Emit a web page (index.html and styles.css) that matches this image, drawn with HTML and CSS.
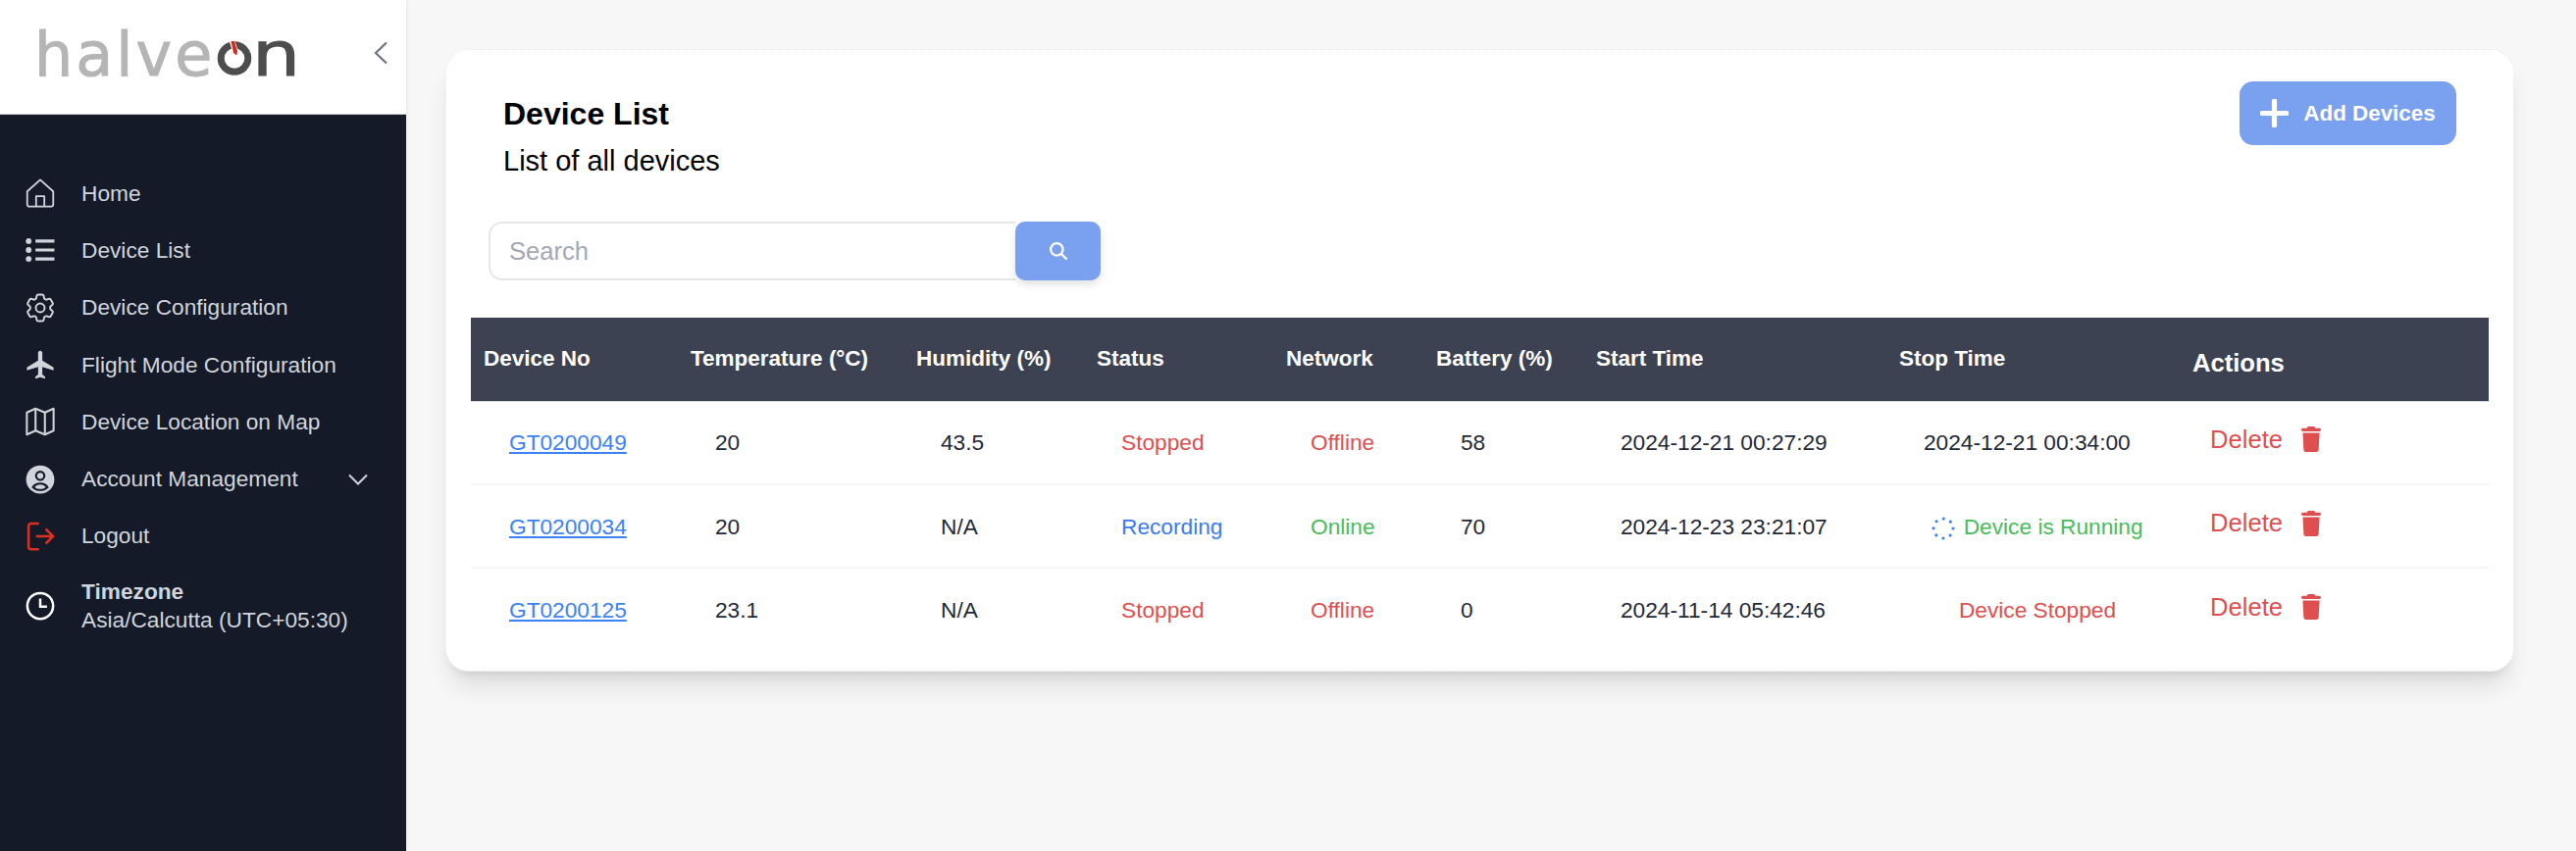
FILE: index.html
```html
<!DOCTYPE html>
<html>
<head>
  <meta charset="UTF-8">
  <title>Device List</title>
  <link rel="stylesheet" href="styles.css">
</head>
<body>

  <aside class="sidebar">
    <div class="brand">
      <div class="logo">
        <span class="logo-light">halve</span>
        <svg class="logo-o" viewBox="0 0 36 36">
          <circle cx="18" cy="18.500" r="13.800" fill="none" stroke="#4d4d4d" stroke-width="7"/>
          <path d="M12.500 0 18 0 22.500 12 22 17 17 15z" fill="#fff"/>
          <path d="M14.500 1 18 1 21 11 20.500 15.500 17 13z" fill="#d9281e"/>
        </svg>
        <span class="logo-dark">n</span>
      </div>
      <svg class="collapse" viewBox="0 0 14 24"><path d="M13 1.500 2 12l11 10.500" fill="none" stroke="#6b7280" stroke-width="2.200"/></svg>
    </div>

    <nav class="menu">
      <a class="menu-item" href="#">
        <svg class="menu-icon" viewBox="1.500 1 21 21.500" fill="none" stroke="#d1d5db" stroke-width="1.300" stroke-linejoin="round"><path d="M2.500 10.500 12 2l9.500 8.500V20a1.500 1.500 0 0 1-1.500 1.500H4A1.500 1.500 0 0 1 2.500 20z"/><path d="M9 21.500V14h6v7.500"/></svg>
        <span>Home</span>
      </a>
      <a class="menu-item" href="#">
        <svg class="menu-icon" viewBox="0 0 28 24" fill="none" stroke="#d1d5db"><path d="M9.500 3.500h18M9.500 12h18M9.500 20.500h18" stroke-width="3"/><circle cx="3" cy="3.500" r="2.700" fill="#d1d5db" stroke="none"/><circle cx="3" cy="12" r="2.700" fill="#d1d5db" stroke="none"/><circle cx="3" cy="20.500" r="2.700" fill="#d1d5db" stroke="none"/></svg>
        <span>Device List</span>
      </a>
      <a class="menu-item" href="#">
        <svg class="menu-icon" viewBox="2 2 20 20" fill="none" stroke="#d1d5db" stroke-width="1.300"><path stroke-linejoin="round" d="M9.594 3.940c.09-.542.56-.94 1.110-.94h2.593c.55 0 1.020.398 1.110.94l.213 1.281c.063.374.313.686.645.870.074.04.147.083.22.127.325.196.72.257 1.075.124l1.217-.456a1.125 1.125 0 0 1 1.370.49l1.296 2.247a1.125 1.125 0 0 1-.26 1.431l-1.003.827c-.293.241-.438.613-.43.992a7.723 7.723 0 0 1 0 .255c-.008.378.137.75.43.991l1.004.827c.424.35.534.955.26 1.430l-1.298 2.247a1.125 1.125 0 0 1-1.369.491l-1.217-.456c-.355-.133-.75-.072-1.076.124a6.470 6.470 0 0 1-.22.128c-.331.183-.581.495-.644.869l-.213 1.281c-.09.543-.56.94-1.110.94h-2.594c-.55 0-1.019-.398-1.110-.94l-.213-1.281c-.062-.374-.312-.686-.644-.87a6.520 6.520 0 0 1-.22-.127c-.325-.196-.72-.257-1.076-.124l-1.217.456a1.125 1.125 0 0 1-1.369-.49l-1.297-2.247a1.125 1.125 0 0 1 .26-1.431l1.004-.827c.292-.24.437-.613.43-.991a6.932 6.932 0 0 1 0-.255c.007-.38-.138-.751-.43-.992l-1.004-.827a1.125 1.125 0 0 1-.26-1.430l1.297-2.247a1.125 1.125 0 0 1 1.370-.491l1.216.456c.356.133.751.072 1.076-.124.072-.044.146-.086.22-.128.332-.183.582-.495.644-.869l.214-1.280Z"/><circle cx="12" cy="12" r="3"/></svg>
        <span>Device Configuration</span>
      </a>
      <a class="menu-item" href="#">
        <svg class="menu-icon" viewBox="1.500 1.500 20 21" fill="#d1d5db"><path d="M21 16v-2l-8-5V3.500c0-.83-.67-1.500-1.500-1.500S10 2.670 10 3.500V9l-8 5v2l8-2.500V19l-2 1.500V22l3.500-1 3.500 1v-1.500L13 19v-5.500l8 2.500z"/></svg>
        <span>Flight Mode Configuration</span>
      </a>
      <a class="menu-item" href="#">
        <svg class="menu-icon" viewBox="1 1.500 22 21.500" fill="none" stroke="#d1d5db" stroke-width="1.500" stroke-linejoin="round"><path d="M2 5.500 8.500 2.500l7 3 6.500-3v16.500l-6.500 3-7-3L2 22z"/><path d="M8.500 2.500v16.500M15.500 5.500V22"/></svg>
        <span>Device Location on Map</span>
      </a>
      <a class="menu-item" href="#">
        <svg class="menu-icon" viewBox="0 0 24 24"><circle cx="12" cy="12" r="11.500" fill="#d1d5db"/><circle cx="12" cy="9" r="4.200" fill="#141a28"/><path d="M5 18.500c1.200-2.700 3.700-4 7-4s5.800 1.300 7 4c-1.800 1.800-4.300 2.900-7 2.900s-5.200-1.100-7-2.900z" fill="#141a28"/><circle cx="12" cy="9" r="2.500" fill="#d1d5db"/><path d="M7.500 18.300c1-1.400 2.500-2.100 4.500-2.100s3.500.7 4.500 2.100c-1.200 1-2.800 1.500-4.500 1.500s-3.300-.5-4.500-1.500z" fill="#d1d5db"/></svg>
        <span>Account Management</span>
        <svg class="menu-caret" viewBox="0 0 20 12"><path d="M1 1.500 10 10.500l9-9" fill="none" stroke="#d1d5db" stroke-width="2"/></svg>
      </a>
      <a class="menu-item" href="#">
        <svg class="menu-icon" viewBox="0 0 24 24" fill="none" stroke="#dc2f1f" stroke-width="2"><path d="M11 1.500H4.500a2 2 0 0 0-2 2v17a2 2 0 0 0 2 2H11"/><path d="M8.500 12h14M16.500 6l6 6-6 6"/></svg>
        <span>Logout</span>
      </a>
      <div class="menu-item timezone">
        <svg class="menu-icon" viewBox="0 0 24 24" fill="none" stroke="#fff" stroke-width="2"><circle cx="12" cy="12" r="10.500"/><path d="M12 6v6.500h5.500"/></svg>
        <div>
          <div class="timezone-title">Timezone</div>
          <div>Asia/Calcutta (UTC+05:30)</div>
        </div>
      </div>
    </nav>
  </aside>

  <main class="content">
    <section class="card">
      <div class="card-head">
        <div class="card-title">
          <h1>Device List</h1>
          <p>List of all devices</p>
        </div>
        <button class="add-btn">
          <svg viewBox="0 0 28 28"><path d="M14 2v24M2 14h24" fill="none" stroke="#fff" stroke-width="5" stroke-linecap="round"/></svg>
          Add Devices
        </button>
      </div>

      <div class="search">
        <input type="text" placeholder="Search">
        <button>
          <svg viewBox="0 0 512 512" fill="#fff"><path d="M416 208c0 45.900-14.900 88.300-40 122.700L502.600 457.400c12.500 12.500 12.500 32.800 0 45.300s-32.800 12.500-45.300 0L330.700 376c-34.400 25.200-76.800 40-122.700 40C93.100 416 0 322.900 0 208S93.100 0 208 0S416 93.100 416 208zM208 352a144 144 0 1 0 0-288 144 144 0 1 0 0 288z"/></svg>
        </button>
      </div>

      <table>
        <colgroup>
          <col class="c-device"><col class="c-temp"><col class="c-hum"><col class="c-status"><col class="c-net"><col class="c-batt"><col class="c-start"><col class="c-stop"><col>
        </colgroup>
        <thead>
          <tr>
            <th>Device No</th>
            <th>Temperature (°C)</th>
            <th>Humidity (%)</th>
            <th>Status</th>
            <th>Network</th>
            <th>Battery (%)</th>
            <th>Start Time</th>
            <th>Stop Time</th>
            <th class="th-actions">Actions</th>
          </tr>
        </thead>
        <tbody>
          <tr>
            <td><a class="device-link" href="#">GT0200049</a></td>
            <td>20</td>
            <td>43.5</td>
            <td class="red">Stopped</td>
            <td class="red">Offline</td>
            <td>58</td>
            <td>2024-12-21 00:27:29</td>
            <td class="td-stop">2024-12-21 00:34:00</td>
            <td class="td-actions"><div class="delete">Delete <svg viewBox="0 0 448 512" preserveAspectRatio="none"><path d="M135.200 17.700L128 32H32C14.300 32 0 46.300 0 64S14.300 96 32 96H416c17.700 0 32-14.300 32-32s-14.300-32-32-32H320l-7.200-14.300C307.400 6.800 296.300 0 284.200 0H163.800c-12.100 0-23.200 6.800-28.600 17.700zM416 128H32L53.200 467c1.600 25.300 22.600 45 47.900 45H346.900c25.300 0 46.300-19.700 47.900-45L416 128z"/></svg></div></td>
          </tr>
          <tr>
            <td><a class="device-link" href="#">GT0200034</a></td>
            <td>20</td>
            <td>N/A</td>
            <td class="blue">Recording</td>
            <td class="green">Online</td>
            <td>70</td>
            <td>2024-12-23 23:21:07</td>
            <td class="td-stop green center">
              <svg class="spinner" viewBox="0 0 24 24"><circle cx="12" cy="12" r="10" fill="none" stroke="#3b82f6" stroke-width="3.200" stroke-linecap="round" stroke-dasharray="0 7.850"/></svg>
              Device is Running
            </td>
            <td class="td-actions"><div class="delete">Delete <svg viewBox="0 0 448 512" preserveAspectRatio="none"><path d="M135.200 17.700L128 32H32C14.300 32 0 46.300 0 64S14.300 96 32 96H416c17.700 0 32-14.300 32-32s-14.300-32-32-32H320l-7.200-14.300C307.400 6.800 296.300 0 284.200 0H163.800c-12.100 0-23.200 6.800-28.600 17.700zM416 128H32L53.200 467c1.600 25.300 22.600 45 47.900 45H346.900c25.300 0 46.300-19.700 47.900-45L416 128z"/></svg></div></td>
          </tr>
          <tr>
            <td><a class="device-link" href="#">GT0200125</a></td>
            <td>23.1</td>
            <td>N/A</td>
            <td class="red">Stopped</td>
            <td class="red">Offline</td>
            <td>0</td>
            <td>2024-11-14 05:42:46</td>
            <td class="td-stop red center">Device Stopped</td>
            <td class="td-actions"><div class="delete">Delete <svg viewBox="0 0 448 512" preserveAspectRatio="none"><path d="M135.200 17.700L128 32H32C14.300 32 0 46.300 0 64S14.300 96 32 96H416c17.700 0 32-14.300 32-32s-14.300-32-32-32H320l-7.200-14.300C307.400 6.800 296.300 0 284.200 0H163.800c-12.100 0-23.200 6.800-28.600 17.700zM416 128H32L53.200 467c1.600 25.300 22.600 45 47.900 45H346.900c25.300 0 46.300-19.700 47.900-45L416 128z"/></svg></div></td>
          </tr>
        </tbody>
      </table>
    </section>
  </main>

</body>
</html>
```

FILE: styles.css
```css
body {
  margin: 0;
  height: 868px;
  overflow: hidden;
  display: flex;
  background-color: #f7f7f7;
  font-family: "Liberation Sans", Arial, sans-serif;
  font-size: 22.4px;
  color: #1f2937;
}

/* sidebar */
.sidebar {
  width: 414px;
  flex-shrink: 0;
  background-color: #141a28;
  box-shadow: 1px 0 3px rgba(0, 0, 0, 0.08);
  font-size: 22.7px;
}

.brand {
  height: 116px;
  background-color: white;
  border-bottom: 1px solid #c9ccd2;
  display: flex;
  align-items: center;
  justify-content: space-between;
  padding: 0 19px 0 35px;
}

.logo {
  display: flex;
  align-items: baseline;
  margin-bottom: 5px;
  font-family: "DejaVu Sans", sans-serif;
  font-size: 62px;
  line-height: 62px;
  letter-spacing: 3px;
  -webkit-text-stroke: 1px;
}

.logo-light {
  color: #b5b5b5;
}

.logo-dark {
  color: #4d4d4d;
  transform: scaleX(1.25);
  transform-origin: left;
}

.logo-o {
  width: 36px;
  height: 36px;
  margin-left: 2px;
}

.collapse {
  width: 14px;
  height: 24px;
  margin-top: -9px;
}

.menu {
  padding-top: 51px;
}

.menu-item {
  height: 58.3px;
  display: flex;
  align-items: center;
  padding: 0 39px 0 26px;
  color: #d1d5db;
  text-decoration: none;
}

.menu-icon {
  width: 30px;
  height: 30px;
  margin-right: 27px;
  flex-shrink: 0;
}

.menu-caret {
  width: 20px;
  height: 12px;
  margin-left: auto;
}

.timezone {
  margin-top: 13px;
  line-height: 29px;
}

.timezone-title {
  font-weight: bold;
}

/* main */
.content {
  flex: 1;
  padding: 50px 63px 0 40px;
}

.card {
  background-color: white;
  border: 1px dotted #e6e6e6;
  border-radius: 24px;
  padding: 0 25px 20px;
  box-shadow: 0 20px 25px -5px rgba(0, 0, 0, 0.1), 0 8px 10px -6px rgba(0, 0, 0, 0.1);
}

.card-head {
  display: flex;
  justify-content: space-between;
  align-items: flex-start;
  padding: 32px 33px 0;
}

.card-title {
  margin-top: 14px;
  color: black;
}

.card-title h1 {
  margin: 0;
  font-size: 32px;
  line-height: 38px;
}

.card-title p {
  margin: 9px 0 0;
  font-size: 29px;
  line-height: 40px;
}

.add-btn {
  width: 221px;
  height: 65px;
  background-color: #7aa1ef;
  border: none;
  border-radius: 14px;
  color: white;
  font-family: inherit;
  font-weight: bold;
  font-size: 22.4px;
  display: flex;
  align-items: center;
  justify-content: center;
  gap: 15px;
}

.add-btn svg {
  width: 29px;
  height: 29px;
}

.search {
  width: 624px;
  height: 60px;
  margin: 42px 0 38px 18px;
  display: flex;
}

.search input {
  flex: 1;
  min-width: 0;
  border: 2px solid #e5e7eb;
  border-right: none;
  border-radius: 14px 0 0 14px;
  padding: 0 19px;
  font-family: inherit;
  font-size: 25.6px;
  outline: none;
}

.search input::placeholder {
  color: #a3a8b3;
}

.search button {
  width: 87px;
  background-color: #7aa1ef;
  border: none;
  border-radius: 10px;
  box-shadow: 0 4px 8px rgba(0, 0, 0, 0.12);
  display: flex;
  align-items: center;
  justify-content: center;
}

.search button svg {
  width: 18px;
  height: 18px;
}

/* table */
table {
  width: 100%;
  table-layout: fixed;
  border-collapse: collapse;
}

.c-device { width: 210px; }
.c-temp { width: 230px; }
.c-hum { width: 184px; }
.c-status { width: 193px; }
.c-net { width: 153px; }
.c-batt { width: 163px; }
.c-start { width: 309px; }
.c-stop { width: 299px; }

th {
  box-sizing: border-box;
  height: 85px;
  padding: 0 0 0 14px;
  background-color: #3c4252;
  color: white;
  text-align: left;
  font-weight: bold;
  font-size: 22.5px;
  white-space: nowrap;
  border-bottom: 1px solid #d8dce3;
}

th:first-child {
  padding-left: 13px;
}

.th-actions {
  font-size: 25.6px;
  padding-top: 8px;
}

td {
  box-sizing: border-box;
  height: 85px;
  padding: 1px 0 0 39px;
  border-bottom: 2px solid #f4f5f6;
  white-space: nowrap;
  font-size: 22.7px;
}

tbody tr:last-child td {
  border-bottom: none;
}

.device-link {
  color: #3b82f6;
}

.red { color: #e04f4f; }
.blue { color: #3b7bf0; }
.green { color: #46bd5a; }

.td-stop {
  padding-right: 28px;
}

.center {
  text-align: center;
}

.spinner {
  width: 24px;
  height: 24px;
  vertical-align: -6px;
  margin-right: 2px;
}

.td-actions {
  padding-left: 32px;
}

.delete {
  display: flex;
  align-items: center;
  gap: 19px;
  font-size: 25.6px;
  color: #e04f4f;
  margin-bottom: 7px;
}

.delete svg {
  width: 20px;
  height: 26px;
  fill: #e04f4f;
}
```
